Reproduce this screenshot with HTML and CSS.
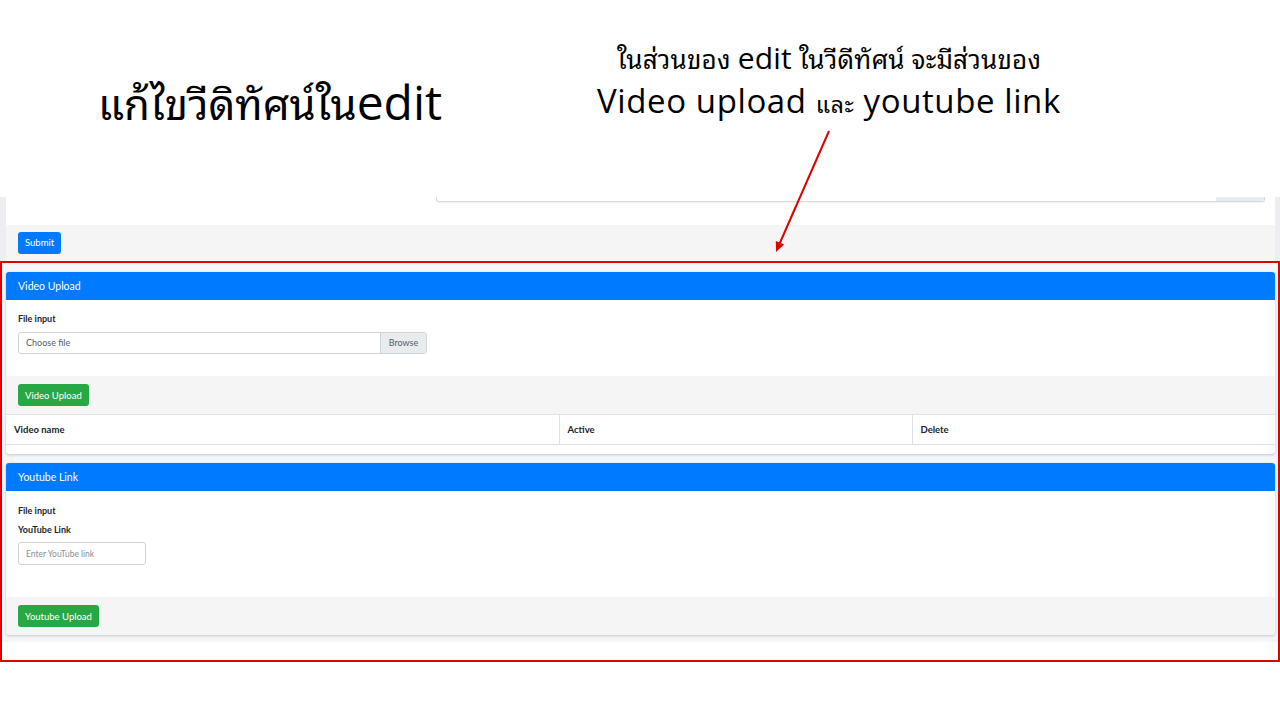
FILE: index.html
```html
<!DOCTYPE html>
<html lang="th">
<head>
    <meta charset="UTF-8">
    <meta name="viewport" content="width=device-width, initial-scale=1.0">
    <title>แก้ไขวีดิทัศน์ใน edit</title>
    <link rel="stylesheet" href="styles.css">
</head>
<body>
    <div class="slide">
        <header class="slide-head">
            <h1 class="slide-title">แก้ไขวีดิทัศน์ใน<span class="latin">edit</span></h1>
            <div class="note">
                <p class="note-line1">ในส่วนของ <span class="note-edit">edit</span> ในวีดีทัศน์ จะมีส่วนของ</p>
                <p class="note-line2">Video upload <span class="note-small">และ</span> youtube link</p>
            </div>
        </header>

        <!-- red arrow pointing at the highlighted area -->
        <svg class="arrow" width="66" height="128" viewBox="0 0 66 128">
            <line x1="59" y1="3" x2="9" y2="117" stroke="#e00000" stroke-width="2"/>
            <polygon points="6,124 14.2,116.6 5.8,113" fill="#e00000"/>
        </svg>

        <div class="shot">
            <div class="prev-card">
                <div class="prev-body">
                    <div class="prev-input"><span class="prev-append"></span></div>
                </div>
                <div class="card-footer">
                    <button class="btn btn-primary">Submit</button>
                </div>
            </div>

            <div class="highlight">
                <div class="content">
                    <div class="card">
                        <div class="card-header">Video Upload</div>
                        <div class="card-body video-body">
                            <label class="form-label">File input</label>
                            <div class="custom-file">
                                <span class="custom-file-text">Choose file</span>
                                <span class="custom-file-btn">Browse</span>
                            </div>
                        </div>
                        <div class="card-footer">
                            <button class="btn btn-success">Video Upload</button>
                        </div>
                        <div class="table-wrap">
                            <table>
                                <thead>
                                    <tr>
                                        <th class="col-name">Video name</th>
                                        <th class="col-active">Active</th>
                                        <th>Delete</th>
                                    </tr>
                                </thead>
                            </table>
                        </div>
                    </div>

                    <div class="card">
                        <div class="card-header">Youtube Link</div>
                        <div class="card-body yt-body">
                            <label class="form-label">File input</label>
                            <label class="form-label">YouTube Link</label>
                            <input type="text" class="form-input" placeholder="Enter YouTube link">
                        </div>
                        <div class="card-footer">
                            <button class="btn btn-success">Youtube Upload</button>
                        </div>
                    </div>
                </div>
                <div class="content-end"></div>
            </div>
        </div>
    </div>
</body>
</html>
```

FILE: styles.css
```css
* {
    box-sizing: border-box;
}

body {
    margin: 0;
    background: #ffffff;
    font-family: "Noto Sans Thai Looped", Loma, Garuda, "Noto Sans Thai", "Liberation Sans", sans-serif;
}

.slide {
    position: relative;
    width: 1280px;
    height: 720px;
    overflow: hidden;
    background: #ffffff;
}

/* slide header */
.slide-head {
    display: flex;
    align-items: flex-start;
    height: 197px;
    padding-left: 98px;
    padding-right: 171px;
}

.slide-title {
    margin: 71px 0 0 0;
    font-weight: normal;
    font-size: 42px;
    line-height: 60px;
    color: #000;
}

.slide-title .latin {
    font-family: "Open Sans", "Liberation Sans", sans-serif;
    font-size: 48px;
}

.note {
    margin-left: auto;
    width: 560px;
    padding-top: 37px;
    text-align: center;
    color: #000;
}

.note p {
    margin: 0;
    white-space: nowrap;
}

.note-line1 {
    font-size: 26px;
    line-height: 40px;
    letter-spacing: 0.2px;
}

.note-edit {
    font-family: "Open Sans", "Liberation Sans", sans-serif;
    font-size: 30px;
}

.note-line2 {
    font-family: "Open Sans", "Liberation Sans", sans-serif;
    font-size: 33px;
    line-height: 46px;
    letter-spacing: 0.6px;
}

.note-small {
    font-family: "Noto Sans Thai Looped", Loma, Garuda, "Noto Sans Thai", "Liberation Sans", sans-serif;
    font-size: 23px;
}

.arrow {
    position: absolute;
    left: 770px;
    top: 128px;
}

/* embedded screenshot */
.shot {
    font-family: Lato, "Open Sans", sans-serif;
    color: #212529;
    background: #eceef1;
}

.prev-card {
    margin: 0 5px 0 6px;
    background: #ffffff;
}

.prev-body {
    height: 28px;
}

.prev-input {
    display: flex;
    justify-content: flex-end;
    height: 5px;
    margin-left: 430px;
    margin-right: 10px;
    border: 1px solid #d6dade;
    border-top: none;
    border-radius: 0 0 3px 3px;
    box-shadow: 0 1px 1px rgba(0, 0, 0, 0.05);
}

.prev-append {
    width: 48px;
    background: #e9ecef;
}

.card-footer {
    display: flex;
    align-items: center;
    height: 38px;
    padding: 0 12px;
    background: #f5f5f6;
}

.prev-card .card-footer {
    height: 36px;
    padding-bottom: 1px;
}

.btn {
    height: 22px;
    padding: 0 7px;
    border: none;
    border-radius: 3px;
    font-family: Lato, "Open Sans", sans-serif;
    font-size: 9.5px;
    color: #ffffff;
}

.btn-primary {
    background: #007bff;
}

.btn-success {
    background: #28a745;
}

.highlight {
    height: 401px;
    border: 2px solid #e00000;
    background: #ffffff;
}

.content {
    display: flex;
    flex-direction: column;
    gap: 9px;
    padding: 9px 3px 7px 4px;
    background: #f4f6f9;
}

.card {
    background: #ffffff;
    border-radius: 3px;
    overflow: hidden;
    box-shadow: 0 0 1px rgba(0, 0, 0, 0.15), 0 1px 3px rgba(0, 0, 0, 0.18);
}

.card-header {
    height: 28px;
    padding: 0 12px;
    line-height: 28px;
    font-size: 10.5px;
    color: #ffffff;
    background: #007bff;
}

.card-body {
    display: flex;
    flex-direction: column;
    align-items: flex-start;
    padding: 13px 12px 0 12px;
}

.video-body {
    height: 76px;
}

.yt-body {
    height: 106px;
    padding-top: 14px;
}

.form-label {
    font-size: 9px;
    font-weight: bold;
    line-height: 12px;
    margin-bottom: 7px;
}

.yt-body .form-label + .form-label {
    margin-bottom: 6px;
}

.custom-file {
    display: flex;
    width: 409px;
    height: 22px;
    border: 1px solid #ced4da;
    border-radius: 3px;
    overflow: hidden;
    font-size: 9px;
    color: #555d66;
}

.custom-file-text {
    flex: 1;
    padding-left: 7px;
    line-height: 20px;
}

.custom-file-btn {
    width: 46px;
    border-left: 1px solid #ced4da;
    background: #e9ecef;
    line-height: 20px;
    text-align: center;
}

.form-input {
    width: 128px;
    height: 23px;
    padding: 0 7px;
    border: 1px solid #ced4da;
    border-radius: 3px;
    font-family: Lato, "Open Sans", sans-serif;
    font-size: 8.5px;
}

.form-input::placeholder {
    color: #8a9097;
}

.table-wrap {
    padding-bottom: 9px;
}

table {
    width: 100%;
    border-collapse: collapse;
}

th {
    height: 30px;
    padding: 0 8px;
    text-align: left;
    font-size: 9.5px;
    font-weight: bold;
    border-top: 1px solid #dee2e6;
    border-bottom: 1px solid #dee2e6;
    border-left: 1px solid #dee2e6;
}

th:first-child {
    border-left: none;
}

.col-name {
    width: 553px;
}

.col-active {
    width: 353px;
}
```
